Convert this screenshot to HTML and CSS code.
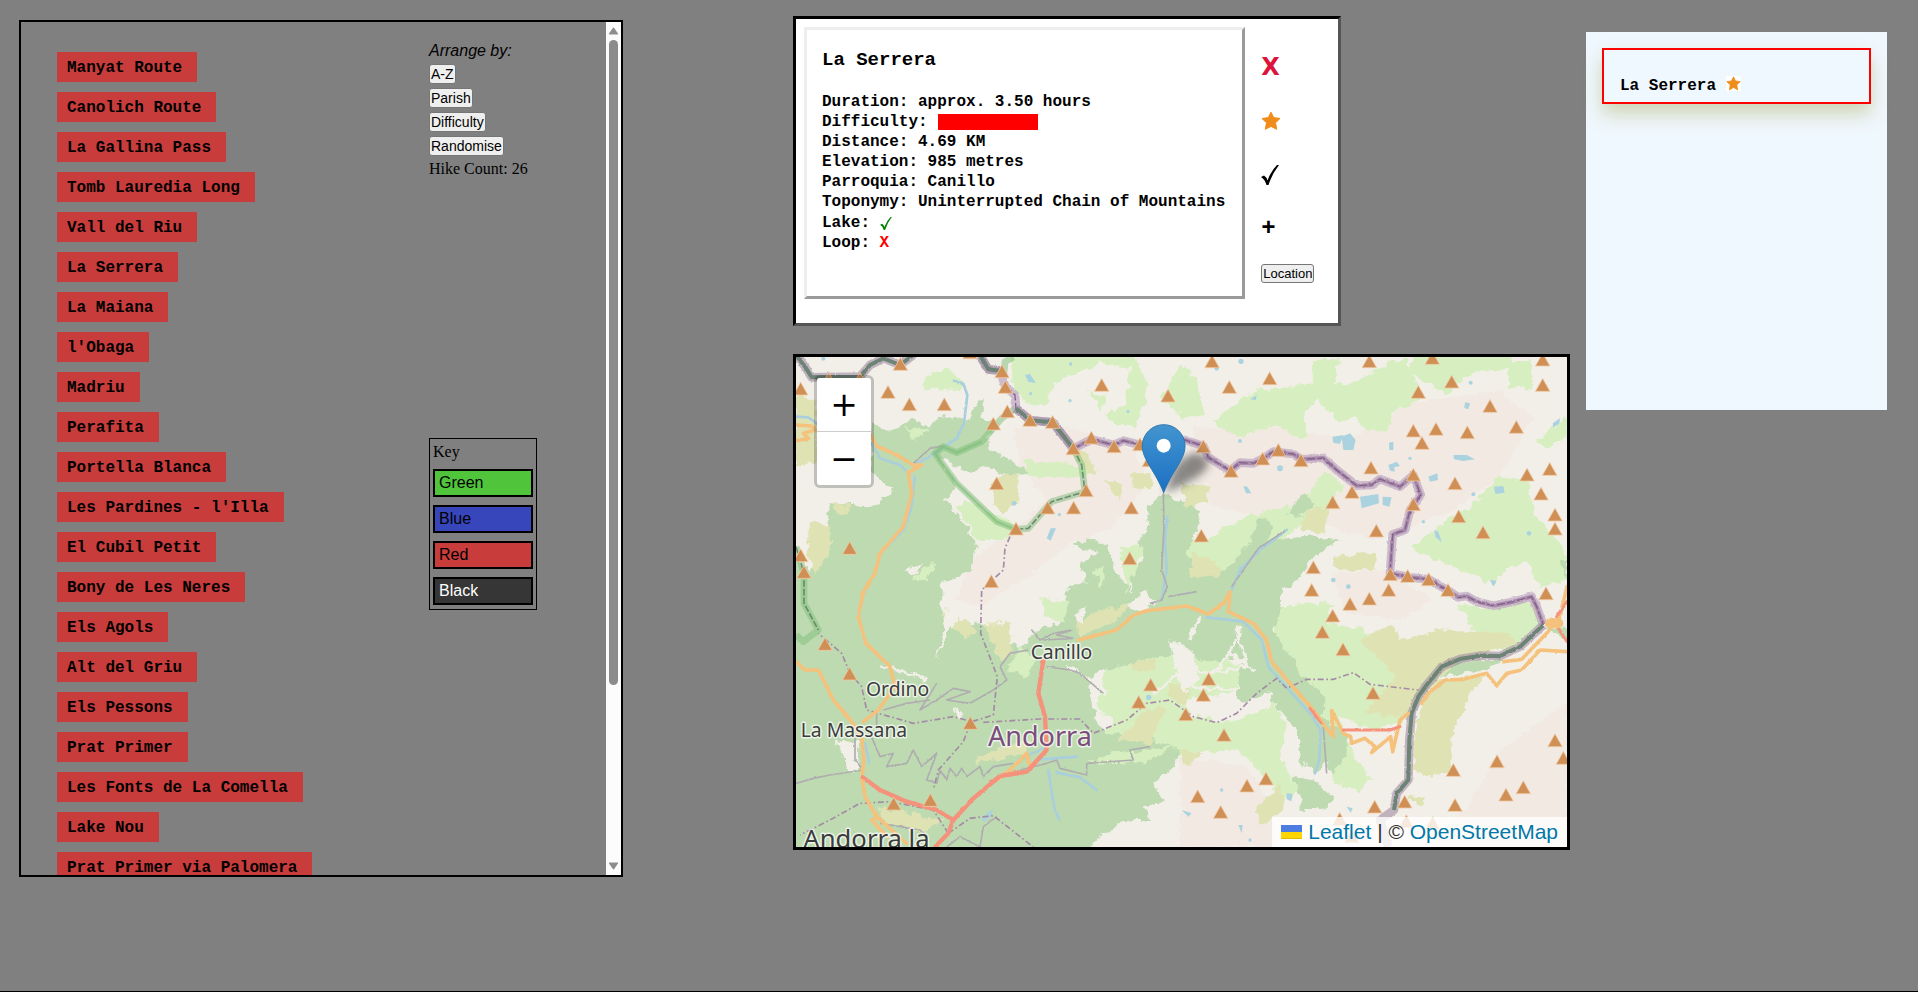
FILE: index.html
```html
<!DOCTYPE html>
<html lang="en">
<head>
<meta charset="utf-8">
<title>Andorra Hikes</title>
<link rel="stylesheet" href="styles.css">
</head>
<body>
<main class="page">
  <section class="sidebar" aria-label="Hikes">
    <div class="scroller">
      <ul class="hikes">
        <li><button class="hike">Manyat Route</button></li>
        <li><button class="hike">Canolich Route</button></li>
        <li><button class="hike">La Gallina Pass</button></li>
        <li><button class="hike">Tomb Lauredia Long</button></li>
        <li><button class="hike">Vall del Riu</button></li>
        <li><button class="hike">La Serrera</button></li>
        <li><button class="hike">La Maiana</button></li>
        <li><button class="hike">l'Obaga</button></li>
        <li><button class="hike">Madriu</button></li>
        <li><button class="hike">Perafita</button></li>
        <li><button class="hike">Portella Blanca</button></li>
        <li><button class="hike">Les Pardines - l'Illa</button></li>
        <li><button class="hike">El Cubil Petit</button></li>
        <li><button class="hike">Bony de Les Neres</button></li>
        <li><button class="hike">Els Agols</button></li>
        <li><button class="hike">Alt del Griu</button></li>
        <li><button class="hike">Els Pessons</button></li>
        <li><button class="hike">Prat Primer</button></li>
        <li><button class="hike">Les Fonts de La Comella</button></li>
        <li><button class="hike">Lake Nou</button></li>
        <li><button class="hike">Prat Primer via Palomera</button></li>
      </ul>
      <div class="tools">
        <div class="arrange">
          <em class="arrange-title">Arrange by:</em>
          <button class="sort">A-Z</button>
          <button class="sort">Parish</button>
          <button class="sort">Difficulty</button>
          <button class="sort">Randomise</button>
          <span class="count">Hike Count: 26</span>
        </div>
        <div class="key">
          <span class="key-title">Key</span>
          <div class="swatch green">Green</div>
          <div class="swatch blue">Blue</div>
          <div class="swatch red">Red</div>
          <div class="swatch black">Black</div>
        </div>
      </div>
    </div>
    <div class="scrollbar" aria-hidden="true">
      <svg class="arrow" viewBox="0 0 9 7"><path d="M4.5 1 8 6H1Z"/></svg>
      <div class="track"><div class="thumb"></div></div>
      <svg class="arrow" viewBox="0 0 9 7"><path d="M4.5 6 8 1H1Z"/></svg>
    </div>
  </section>

  <section class="center">
    <article class="card">
      <div class="details">
        <h3 class="title">La Serrera</h3>
        <p>Duration: approx. 3.50 hours</p>
        <p class="difficulty">Difficulty: <span class="bar"></span></p>
        <p>Distance: 4.69 KM</p>
        <p>Elevation: 985 metres</p>
        <p>Parroquia: Canillo</p>
        <p>Toponymy: Uninterrupted Chain of Mountains</p>
        <p class="lake">Lake: <svg class="yes" viewBox="0 0 18 20" role="img" aria-label="Yes"><path d="M0 12 3 10.500Q5.500 12 6.500 15.500 10 6 16 0H18Q11 9 7.500 20H5.500Q4 14.500 0 12Z"/></svg></p>
        <p>Loop: <span class="no">X</span></p>
      </div>
      <div class="actions">
        <button class="action close">X</button>
        <button class="action" aria-label="Favourite"><svg class="star-large" viewBox="0 0 20 20"><path d="M10 1.200 12.700 6.600 19 7.500 14.500 11.800 15.700 18.300 10 15.400 4.300 18.300 5.500 11.800 1 7.500 7.300 6.600Z"/></svg></button>
        <button class="action" aria-label="Completed"><svg class="tick" viewBox="0 0 18 20"><path d="M0 12 3 10.500Q5.500 12 6.500 15.500 10 6 16 0H18Q11 9 7.500 20H5.500Q4 14.500 0 12Z"/></svg></button>
        <button class="action plus">+</button>
        <button class="location">Location</button>
      </div>
    </article>

    <div class="map">
      <svg class="tiles" viewBox="48 51 2313 1470" preserveAspectRatio="xMidYMid slice" role="img" aria-label="Map of Andorra">
        <defs>
          <filter id="rough" x="-5%" y="-5%" width="110%" height="110%">
            <feTurbulence type="fractalNoise" baseFrequency="0.04" numOctaves="5" seed="4"/>
            <feDisplacementMap in="SourceGraphic" scale="28" xChannelSelector="R" yChannelSelector="G"/>
          </filter>
          <filter id="wobble" x="-5%" y="-5%" width="110%" height="110%">
            <feTurbulence type="fractalNoise" baseFrequency="0.08" numOctaves="2" seed="9"/>
            <feDisplacementMap in="SourceGraphic" scale="7" xChannelSelector="R" yChannelSelector="G"/>
          </filter>
          <filter id="soft" x="-50%" y="-50%" width="200%" height="200%"><feGaussianBlur stdDeviation="12"/></filter>
          <marker id="peak" markerUnits="userSpaceOnUse" markerWidth="58" markerHeight="53" refX="24" refY="22" viewBox="0 0 48 44" orient="0">
            <path d="M24 5 42 37H6Z" fill="#d08f55" stroke="#efcba8" stroke-width="2"/>
          </marker>
          <linearGradient id="pin" x1="0" y1="0" x2="0" y2="1"><stop offset="0" stop-color="#4295cf"/><stop offset="1" stop-color="#1c70c4"/></linearGradient>
        </defs>
        <rect x="0" y="0" width="2420" height="1600" fill="#f2efe9"/>
        <g filter="url(#rough)">
          <g fill="#f2e9e3">
            <path d="M700 260 860 260 1060 330 1110 420 1000 560 860 620 760 700 600 800 520 780 560 700 600 640 700 570 800 480 720 380Z"/>
            <path d="M1240 260 1500 260 1700 300 1900 190 2150 150 2260 230 2150 420 2000 520 1900 560 1780 600 1640 560 1300 500 1230 400Z"/>
            <path d="M1200 1250 1400 1280 1480 1400 1480 1521 1200 1521Z M2160 1230 2361 1090V1521H1940L2060 1400Z M1650 700 1820 690 1960 780 1860 840 1700 820Z"/>
          </g>
          <g fill="#d7efc0">
            <path d="M690 40H1060L1100 120 1095 190 1060 260 990 245 950 190 910 130 850 105 820 140 800 195 740 190 700 140Z"/>
            <path d="M430 110 500 85 555 130 540 150 430 145Z M1140 175 1200 75 1250 110 1275 225 1210 235Z"/>
            <path d="M1300 240 1430 150 1530 140 1600 130 1595 60 1680 55 1660 130 1700 135 1800 90 1830 60 1880 60 1900 110 1920 180 1840 220 1815 275 1745 265 1730 230 1680 245 1610 180 1570 230 1585 290 1550 290 1490 255 1370 290Z"/>
            <path d="M1900 40H2200L2190 85 2080 100 1990 160 1890 100Z M2190 70 2255 60 2260 150 2190 140Z M2361 230 2270 300 2290 330 2361 290Z"/>
            <path d="M1895 620 2000 540 2070 505 2150 415 2240 410 2265 530 2350 620 2361 720 2280 740 2240 660 2180 690 2140 730 2010 680Z"/>
            <path d="M2030 790 2130 810 2260 780 2280 850 2180 940 2080 870Z M560 480 710 560 680 600 590 600 530 500Z M730 360 850 370 960 390 900 410 740 410Z"/>
            <path d="M1640 390 1690 440 1640 500 1560 560 1480 620 1340 760 1220 740 1220 600 1290 590 1400 530 1560 490Z"/>
            <path d="M1480 800 1660 790 1640 850 1740 860 1850 960 1940 1040 1880 1140 1780 1170 1680 1130 1720 1250 1780 1310 1740 1350 1660 1330 1640 1200 1500 1070Z"/>
            <path d="M1200 1130 1330 1120 1460 1060 1520 1150 1500 1260 1560 1350 1510 1380 1380 1230 1200 1240Z M980 960 1130 920 1300 950 1400 980 1360 1060 1200 1080 1260 1160 1240 1240 980 1270 900 1250 1000 1150 950 1100Z"/>
          </g>
          <g fill="#bddab1">
            <path d="M275 250 330 275 400 235 440 265 490 225 560 245 605 170 605 240 640 240 620 320 690 360 750 400 690 410 620 380 560 400 480 350 530 440 495 480 560 560 590 620 570 690 490 730 480 790 510 860 600 850 690 900 720 930 760 880 850 840 860 750 920 720 900 670 960 640 880 620 920 595 980 610 1010 700 1060 760 1045 700 1090 660 1070 610 1105 570 1100 500 1150 460 1260 510 1250 580 1220 640 1240 700 1340 690 1370 790 1420 880 1470 960 1500 1070 1400 1080 1430 1020 1390 950 1300 970 1200 940 1060 970 940 1000 930 1050 950 1140 980 1180 1100 1190 1200 1230 1185 1280 1120 1330 1150 1380 1090 1400 1110 1440 1030 1440 960 1490 900 1560H0V900L40 640 90 700 130 640 150 490 280 500 340 450 300 420 275 400Z"/>
            <path d="M1330 700 1400 620 1440 530 1480 560 1460 600 1580 590 1680 600 1600 650 1570 700 1500 760 1500 820 1480 870 1540 960 1560 1000 1640 1070 1620 1130 1700 1180 1700 1250 1660 1300 1640 1270 1600 1300 1560 1260 1560 1180 1480 1090 1370 1080 1380 980 1430 950 1400 860 1340 800 1350 760Z"/>
            <path d="M1540 1310 1600 1320 1660 1370 1630 1410 1570 1410Z M1580 460 1600 500 1560 530 1520 520Z M2340 670 2361 650V720Z M2020 960 2180 960 2100 990 1980 1010Z M2290 860 2361 860V900Z"/>
          </g>
          <g fill="#dfe3b3">
            <path d="M48 160 110 190 110 370 48 380Z M640 410 715 400 720 470 670 520 630 480Z M160 490 215 500 200 525 170 520Z M90 540 150 560 150 640 110 700 80 640Z"/>
            <path d="M880 330 920 340 950 400 920 400Z M970 420 1030 430 1020 480Z M1050 400 1110 400 1120 440 1060 450Z M1200 430 1290 440 1280 490 1220 500Z"/>
            <path d="M1580 510 1645 500 1640 580 1560 570Z M1660 650 1780 640 1790 690 1670 690Z M1230 640 1310 660 1320 710 1230 710Z M500 800 590 870 560 900 480 830Z M610 850 690 850 700 950 660 960Z"/>
            <path d="M1740 900 1840 855 1860 900 1970 870 2180 880 2220 910 2040 960 1950 1040 1900 1110 1880 1130 1760 1120 1780 1080 1850 1010 1800 960Z"/>
            <path d="M1960 1020 2120 1010 2070 1060 2010 1200 2020 1290 1950 1310 1900 1290 1905 1150Z M590 1250 760 1190 730 1240 590 1270Z M1010 1200 1100 1110 1160 1100 1110 1210Z"/>
            <path d="M290 1400 490 1440 430 1480 320 1450Z M1430 1390 1500 1340 1520 1400 1440 1460Z M1880 1370 1935 1370 1920 1400Z M1200 1230 1270 1240 1220 1280Z M1050 970 1130 960 1120 990 1060 990Z M1160 1030 1230 1050 1220 1100 1170 1070Z M890 850 960 810 1060 790 1000 850 900 890Z"/>
          </g>
          <g fill="#d7efc0">
            <path d="M780 770 870 790 850 840 790 830Z M720 920 770 960 740 1010 680 990Z M1000 1240 1180 1220 1100 1270 920 1270Z M390 720 470 660 440 720Z M380 260 450 270 400 300Z M1020 620 1090 620 1060 700 1040 760Z M940 690 970 680 965 750Z"/>
          </g>
          <g fill="#f2efe9">
            <path d="M860 110 960 70 1050 80 1040 190 960 230 980 170 900 140Z M540 420 600 400 640 470 630 520 560 460Z M490 810 570 790 500 880 470 960 485 880Z M520 1100 550 1120 540 1140Z M1040 800 1100 750 1130 790 1080 815Z"/>
            <path d="M1370 1100 1470 1050 1470 1100 1330 1150 1260 1130 1290 1090Z M1170 900 1230 930 1260 1020 1210 1060 1180 970Z M380 690 430 670 400 710Z M170 1200 240 1210 230 1300 200 1280Z M880 820 920 800 900 850Z M1750 1240 1860 1250 1860 1340 1780 1320 1740 1280Z"/>
          </g>
          <path d="M1380 860 1350 940 1300 1000M1370 870 1400 960M1350 940 1420 990M1210 960 1280 1000 1400 980M1260 830 1230 900M300 980 390 1000 440 1020M1220 1040 1370 1050M860 980 920 1010 980 1060M1120 1060 1180 1010 1240 960" fill="none" stroke="#f2efe9" stroke-width="9"/>
        </g>
        <g fill="#aad3df">
          <path d="M1685 290 1710 280 1727 300 1720 330 1690 330Z M1657 290 1690 285 1680 312 1660 308Z M1740 470 1795 462 1797 490 1745 505Z M1808 470 1835 472 1828 500 1808 495Z M1825 375 1850 365 1860 378 1842 382 1845 395 1830 392Z M1827 308 1840 305 1840 330 1828 330Z"/>
          <path d="M2020 345 2060 345 2085 358 2050 363 2022 358Z M1945 410 1972 400 1974 420 1950 425Z M2055 187 2070 190 2065 208 2053 204Z M2142 440 2170 438 2174 458 2146 462Z M2318 250 2340 235 2338 252 2320 262Z M1410 178 1430 165 1428 180Z M1390 438 1402 440 1414 460 1398 460Z M1963 570 1975 575 1986 608 1966 590Z"/>
          <path d="M800 595 812 565 828 565 812 602Z M735 105 750 102 768 130 745 125Z M604 1435 640 1405 632 1430 610 1445Z M2130 720 2150 722 2140 740Z M1520 1360 1538 1362 1534 1384 1520 1378Z M1205 1410 1235 1420 1225 1430Z M1375 1455 1388 1455 1385 1480Z M1700 1400 1718 1405 1712 1418Z"/>
          <circle cx="702" cy="490" r="7"/><circle cx="838" cy="524" r="5"/><circle cx="1500" cy="385" r="9"/><circle cx="1380" cy="303" r="6"/><circle cx="1310" cy="85" r="7"/><circle cx="1383" cy="64" r="8"/><circle cx="2080" cy="463" r="6"/><circle cx="1930" cy="545" r="5"/><circle cx="2247" cy="580" r="7"/><circle cx="1660" cy="720" r="7"/><circle cx="1705" cy="740" r="7"/><circle cx="1325" cy="1350" r="5"/><circle cx="1410" cy="1500" r="5"/><circle cx="130" cy="56" r="6"/><circle cx="872" cy="72" r="5"/><circle cx="870" cy="182" r="5"/><circle cx="1044" cy="214" r="5"/><circle cx="752" cy="161" r="5"/><circle cx="2072" cy="128" r="6"/><circle cx="1890" cy="355" r="5"/><circle cx="1106" cy="1072" r="8"/>
        </g>
        <g filter="url(#wobble)">
        <g fill="none" stroke="#a9cfdc" stroke-width="8" stroke-linejoin="round" stroke-linecap="round">
          <path d="M522 122 550 132 562 165 552 250 530 295 440 355 405 372M48 230 85 232 110 250M275 310 300 355 360 375 385 400M404 410 395 500 370 570 300 640 290 690 250 760"/>
          <path d="M1162 530 1155 600 1160 690 1145 780M1520 570 1440 630 1380 690 1355 750M1280 832 1390 845 1445 900 1465 980 1500 1020 1590 1120 1622 1170 1618 1260 1605 1300M780 1258 890 1250M805 1290 822 1400 838 1440M830 1298 900 1312 950 1350M255 1210 268 1270M715 1260 790 1225"/>
        </g>
        <g fill="none" stroke="#b0adb0" stroke-width="5" stroke-linejoin="round">
          <path d="M1150 460 1152 560 1145 690 1162 740 1145 780 1110 790M1165 770 1250 755M1515 572 1435 625 1355 740M400 370 450 325 490 318M745 930 690 940 660 980 680 1020 640 1050 570 1090 500 1080 570 1055 520 1045 470 1080 420 1110 470 1030M48 1330 100 1315 150 1305 250 1290 225 1260 225 1180"/>
          <path d="M270 1180 300 1250 340 1240 320 1280 380 1270 400 1230 425 1280 470 1240 440 1320 470 1330 480 1290 500 1320 510 1285 530 1310 545 1285 560 1310 600 1280 610 1310 640 1280 700 1270M720 1290 800 1270 830 1260 840 1285 920 1305 920 1270 1060 1260 1050 1230 1110 1220M755 870 780 900 820 880 875 870 830 885 880 895 790 900M800 980 870 990 900 1000 970 1060M500 1521 540 1490 600 1521 610 1460 650 1430M1630 1160 1640 1300M310 1110 380 1090 450 1080M290 1110 290 1170M300 1450 420 1470 440 1490"/>
        </g>
        </g>
        <g fill="none" stroke="#a58aa5" stroke-width="5" stroke-dasharray="18 8 5 8">
          <path d="M690 590 675 625 670 690 605 750 602 880 652 1010 640 1125 575 1145 520 1130 400 1150 260 1110 245 1040 210 1000 185 940 115 880M571 1150 550 1205 475 1290 460 1350M505 1480 460 1410 330 1385 240 1390 150 1440 60 1485M505 1480 570 1435 640 1427 760 1521M610 1147 780 1137 900 1137 940 1180 1040 1140 1100 1090 1170 1080 1240 1130 1310 1148 1370 1120 1430 1060 1490 1015 1520 1045 1580 1018 1660 1018 1720 998 1770 1033 1915 1050"/>
        </g>
        <g fill="none" stroke="#7dbd78" stroke-linejoin="round">
          <path d="M672 100 675 65 700 51M708 205 665 235 605 305 530 338 490 320 465 340 530 430 650 545 710 568 745 565 815 485 915 455 905 375 880 326M48 620 72 700 72 790 115 870 70 905 48 885" stroke-width="20" opacity=".5"/>
          <path d="M605 305 530 338 490 320 465 340 530 430 650 545 700 566" stroke-width="7" opacity=".6"/>
          <path d="M710 568 745 565 815 485 915 455 905 375 880 326M48 620 72 700 72 790 115 870" stroke="#52705c" stroke-width="5" stroke-dasharray="20 6" opacity=".7"/>
        </g>
        <g filter="url(#wobble)">
        <g fill="none" stroke-linejoin="round">
          <path d="M600 51 625 88 660 92 676 140 705 165 708 205 750 241 818 247 880 326 934 298 1002 315 1030 302 1080 314 1215 300 1270 318 1285 352 1350 392 1380 368 1420 370 1450 355 1480 335 1540 342 1563 358 1630 354 1670 390 1730 437 1775 435 1800 417 1860 440 1900 405 1922 465 1890 510 1875 570 1838 583 1830 700 1890 712 1946 718 2005 752 2035 772 2060 768 2090 785 2140 797 2200 785 2255 770 2270 800 2290 855" stroke="#bda5c0" stroke-width="26" opacity=".7"/>
          <path d="M880 326 934 298 1002 315 1030 302 1080 314 1215 300 1270 318 1285 352 1350 392 1380 368 1420 370 1450 355 1480 335 1540 342 1563 358 1630 354 1670 390 1730 437 1775 435 1800 417 1860 440 1900 405 1922 465 1890 510 1875 570 1838 583 1830 700 1890 712 1946 718 2005 752 2035 772 2060 768 2090 785 2140 797 2200 785 2255 770 2270 800 2290 855" stroke="#aa8dad" stroke-width="12"/>
          <path d="M676 140 705 165 708 205M880 326 934 298 1002 315 1030 302 1080 314 1215 300 1270 318 1285 352 1350 392 1380 368 1420 370 1450 355 1480 335 1540 342 1563 358 1630 354 1670 390 1730 437 1775 435 1800 417 1860 440 1900 405 1922 465 1890 510 1875 570 1838 583 1830 700 1890 712 1946 718 2005 752 2035 772 2060 768 2090 785 2140 797 2200 785 2255 770 2270 800 2290 855" stroke="#82608a" stroke-width="4" stroke-dasharray="24 7"/>
          <path d="M48 45 75 80 95 112 240 110 270 75 310 55 360 75 400 45M600 45 625 88 660 92M708 205 750 241 818 247 880 326M2290 855 2220 920 2160 948 2100 947 2040 957 1985 980 1940 1035 1915 1070 1895 1120 1888 1200 1885 1320 1850 1360 1842 1410 1800 1440 1825 1521" stroke="#a08ca2" stroke-width="26" opacity=".6"/>
          <path d="M48 45 75 80 95 112 240 110 270 75 310 55 360 75 400 45M600 45 625 88 660 92M708 205 750 241 818 247 880 326M2290 855 2220 920 2160 948 2100 947 2040 957 1985 980 1940 1035 1915 1070 1895 1120 1888 1200 1885 1320 1850 1360 1842 1410" stroke="#6c8376" stroke-width="12"/>
        </g>
        <g fill="none" stroke-linejoin="round" stroke-linecap="round">
          <g stroke="#f5c27d" stroke-width="11">
            <path d="M48 255 95 258 105 270 70 280 85 295 48 302M272 285 290 318 350 345 400 375 425 375 385 398 395 460 370 560 300 640 285 700 250 755 235 830 258 910 330 980 345 1040 295 1110 250 1145M48 965 75 990 115 990 160 1080 215 1145 245 1190 252 1260 245 1310 255 1370 290 1430 380 1510M290 1430 275 1440 320 1490"/>
            <path d="M895 900 1010 870 1060 825 1100 812 1220 798 1285 822 1330 790 1350 755 1345 815 1420 850 1460 900 1475 965 1530 1030 1600 1110 1640 1165 1660 1190 1655 1112 1690 1180 1712 1190 1715 1210 1755 1195 1785 1220 1775 1238 1832 1190 1838 1235 1860 1140 1885 1120M1925 1090 1945 1060 1995 1020 2050 1018 2120 1000 2150 1037 2180 1000 2225 990 2280 930 2361 935M2172 965 2225 958 2300 880 2340 830 2361 740M650 1320 690 1290 740 1240 750 1280"/>
          </g>
          <g stroke="#f4927b" stroke-width="13">
            <path d="M248 1312 300 1350 380 1385 470 1410 520 1440 505 1480 465 1521M520 1440 580 1375 660 1308 740 1295 800 1230 795 1130 775 1060 790 960" /><path d="M1590 1105 1625 1150M1690 1170 1830 1170 1860 1160M2330 830 2361 785M2335 865 2361 905" stroke-width="9"/>
          </g>
          <path d="M2310 850H2335" stroke="#f5c27d" stroke-width="30"/>
        </g>
        </g>
        <g class="places">
          <text x="752" y="958">Canillo</text>
          <text x="258" y="1068">Ordino</text>
          <text x="62" y="1190">La Massana</text>
          <text class="city" x="70" y="1525">Andorra la</text>
          <text class="country" x="624" y="1218">Andorra</text>
        </g>
        <polyline class="peaks" points="361,73 324,157 388,194 493,194 62,147 146,118 240,118 666,95 676,142 682,215 640,252 750,241 818,247 880,326 934,294 1002,320 1080,314 1108,362 650,431 918,452 803,504 881,504 1054,504 708,567 1049,656 634,725 209,625 62,647 72,697 965,136 1164,168 570,38 1296,65 1348,142 1469,116 1768,65 1957,55 2288,60 2288,136 2015,126 1915,157 2130,199 1900,273 1968,268 2062,278 2209,262 1926,310 1773,384 1900,405 1900,494 2025,431 2241,405 2309,388 2283,462 2325,525 2325,567 2036,530 2109,578 1789,573 1658,488 1716,457 1563,362 1495,331 1448,357 1353,394 1270,320 1264,588 1600,683 1595,751 1831,704 1883,709 1946,719 2004,751 1826,751 1768,777 1710,793 2298,761 135,913 209,1002 571,1150 341,1392 451,1381 1112,1035 1076,1087 1658,828 1627,877 1689,929 1286,1018 1270,1066 1217,1124 1332,1186 1779,1060 1253,1370 1322,1417 1401,1338 1458,1317 1784,1401 1679,1438 1874,1386 2020,1291 2025,1396 2151,1265 2178,1365 2230,1343 2325,1202 2350,1255 1879,1445 1715,1490 1958,1450"/>
        <path d="M1153 458 1185 380Q1235 320 1275 350T1210 435Z" fill="#333" opacity=".55" filter="url(#soft)"/>
        <path d="M1151 458C1138 425 1125 405 1110 380 1097 357 1087 340 1087 318A64 64 0 0 1 1215 318C1215 340 1205 357 1192 380 1177 405 1164 425 1151 458Z" fill="url(#pin)" stroke="#2d76b0" stroke-width="3"/>
        <circle cx="1151" cy="317" r="21" fill="#fff"/>
      </svg>
      <div class="zoom">
        <button class="zoom-button" aria-label="Zoom in">+</button>
        <button class="zoom-button" aria-label="Zoom out">−</button>
      </div>
      <div class="attribution">
        <svg class="flag" viewBox="0 0 21 14"><path fill="#4c7be1" d="M0 0h21v7H0z"/><path fill="#ffd500" d="M0 7h21v6H0z"/><path fill="#e0bc00" d="M0 13h21v1H0z"/></svg>
        <a href="#leaflet">Leaflet</a> | © <a href="#osm">OpenStreetMap</a>
      </div>
    </div>
  </section>

  <aside class="favourites" aria-label="Favourites">
    <div class="favourite">La Serrera <svg class="star-small" viewBox="0 0 20 20"><path d="M10 1 12.7 6.6 19 7.5 14.4 11.8 15.5 18.5 10 15.2 4.5 18.5 5.6 11.8 1 7.5 7.3 6.6Z"/></svg></div>
  </aside>
</main>
</body>
</html>
```

FILE: styles.css
```css
* {
  box-sizing: border-box;
}

body {
  margin: 0;
  min-height: 100vh;
  background: #808080;
  border-bottom: 1px solid #000;
  color: #000;
  font-family: "Liberation Serif", serif;
  font-size: 16px;
}

button {
  color: inherit;
  cursor: pointer;
}

.page {
  display: grid;
  grid-template-columns: minmax(0, 604fr) minmax(0, 170fr) minmax(0, 777fr) minmax(0, 16fr) minmax(0, 301fr);
  align-items: start;
  padding: 16px 31px 0 19px;
}

/* Hike list */

.sidebar {
  display: flex;
  height: calc(100vh - 135px);
  margin-top: 4px;
  overflow: hidden;
  border: 2px solid #000;
}

.scroller {
  display: flex;
  flex: 1;
  padding-left: 36px;
  overflow-x: hidden;
  overflow-y: auto;
  scrollbar-width: none;
}

.scrollbar {
  display: flex;
  flex: 0 0 15px;
  flex-direction: column;
  align-items: center;
  gap: 5px;
  padding: 5px 0;
  background: #fcfcfc;
}

.arrow {
  width: 11px;
  height: 8px;
  fill: #8b8b8b;
  stroke: #8b8b8b;
  stroke-linejoin: round;
}

.track {
  flex: 1;
  width: 9px;
}

.thumb {
  height: 79%;
  border-radius: 5px;
  background: #8b8b8b;
}

.hikes {
  display: flex;
  flex: 0 0 372px;
  flex-direction: column;
  gap: 10px;
  height: 1070px;
  margin: 0;
  padding: 30px 0 0;
  list-style: none;
}

.hike {
  display: block;
  height: 30px;
  padding: 2px 15px 0 10px;
  border: 0;
  background: #c83c3c;
  font: bold 16px/28px "Liberation Mono", monospace;
}

.tools {
  padding-top: 20px;
}

.arrange {
  display: flex;
  flex-direction: column;
  align-items: flex-start;
  gap: 4px;
  line-height: 18px;
}

.arrange-title {
  font-family: "Liberation Sans", Arial, sans-serif;
}

.sort {
  height: 20px;
  padding: 1px;
  border: 1px solid #767676;
  border-radius: 3px;
  background: #efefef;
  font: 14px/16px "Liberation Sans", Arial, sans-serif;
}

.key {
  display: flex;
  flex-direction: column;
  gap: 8px;
  width: 108px;
  margin-top: 260px;
  padding: 4px 3px;
  border: 1px solid #000;
}

.key-title {
  line-height: 18px;
}

.swatch {
  height: 28px;
  padding: 0 4px;
  border: 2px solid #000;
  font: 16px/24px "Liberation Sans", Arial, sans-serif;
}

.green {
  background: #50c53c;
}

.blue {
  background: #3846bc;
}

.red {
  background: #c83c3c;
}

.black {
  background: #363636;
  color: #fff;
}

/* Selected hike and map */

.center {
  display: flex;
  flex-direction: column;
  align-items: flex-start;
  grid-column: 3;
  gap: 28px;
}

.card {
  display: flex;
  gap: 16px;
  padding: 8px 24px 24px 8px;
  border: 3px solid;
  border-color: #000 #555 #555 #000;
  background: #fff;
  font: bold 16px/20px "Liberation Mono", monospace;
}

.details {
  padding: 18px 17px 43px 15px;
  border: 3px solid;
  border-color: #eee #9a9a9a #9a9a9a #eee;
  white-space: nowrap;
}

.details p {
  margin: 0;
}

.title {
  margin: 0 0 20px;
  font-size: 19px;
  line-height: 24px;
}

.difficulty {
  display: flex;
  align-items: center;
  gap: 10px;
}

.bar {
  width: 100px;
  height: 16px;
  background: #f00;
}

.details .lake {
  display: flex;
  align-items: center;
  gap: 10px;
  padding-top: 1px;
}

.yes {
  width: 12px;
  height: 13px;
  fill: #008000;
}

.no {
  color: #f00;
}

.actions {
  display: flex;
  flex-direction: column;
  align-items: flex-start;
  padding-top: 13px;
}

.action {
  display: flex;
  align-items: center;
  height: 54px;
  padding: 0;
  border: 0;
  background: none;
  font: bold 24px/24px "DejaVu Sans", sans-serif;
}

.close {
  color: #dc143c;
}

.tick {
  width: 18px;
  height: 20px;
}

.plus {
  font: bold 24px/24px "Liberation Mono", monospace;
}

.star-large {
  width: 20px;
  height: 20px;
}

.star-large path,
.star-small path {
  fill: #f08c1a;
  stroke: #f08c1a;
  stroke-linejoin: round;
}

.location {
  height: 19px;
  margin-top: 8px;
  padding: 0 1px;
  border: 1px solid #767676;
  border-radius: 3px;
  background: #efefef;
  font: 13px/16px "Liberation Sans", Arial, sans-serif;
}

.map {
  position: relative;
  width: 100%;
  height: 50vh;
  overflow: hidden;
  border: 3px solid #000;
}

.tiles {
  display: block;
  width: 100%;
  height: 100%;
}

.places {
  fill: #3c3c3c;
  stroke: #fff;
  stroke-opacity: .7;
  stroke-width: 9px;
  stroke-linejoin: round;
  paint-order: stroke;
  font-family: "Noto Sans", sans-serif;
  font-size: 58px;
}

.places .city {
  font-size: 77px;
}

.places .country {
  fill: #7a4d7c;
  font-size: 81px;
}

.peaks {
  fill: none;
  stroke: none;
  marker: url(#peak);
}

.zoom {
  position: absolute;
  top: 18px;
  left: 18px;
  display: flex;
  flex-direction: column;
  gap: 1px;
  overflow: hidden;
  border: 3px solid rgba(0, 0, 0, .2);
  border-radius: 6px;
  background: #ccc;
  background-clip: padding-box;
}

.zoom-button {
  width: 54px;
  height: 53px;
  padding: 0;
  border: 0;
  background: #fff;
  font: 33px/53px "DejaVu Sans", sans-serif;
}

.attribution {
  position: absolute;
  right: 0;
  bottom: 0;
  padding: 0 9px;
  background: rgba(255, 255, 255, .8);
  color: #333;
  font: 21px/30px "Liberation Sans", Arial, sans-serif;
}

.attribution a {
  color: #0078a8;
  text-decoration: none;
}

.flag {
  width: 21px;
  height: 14px;
}

/* Favourites */

.favourites {
  grid-column: 5;
  min-height: 378px;
  margin-top: 16px;
  padding: 16px;
  background: #f0f8ff;
}

.favourite {
  display: flex;
  gap: 10px;
  padding: 26px 16px 6px;
  border: 2px solid #f00;
  box-shadow: 0 10px 20px rgba(128, 128, 0, .3);
  font: bold 16px/20px "Liberation Mono", monospace;
}

.star-small {
  width: 15px;
  height: 15px;
  background: #fff;
}
```
